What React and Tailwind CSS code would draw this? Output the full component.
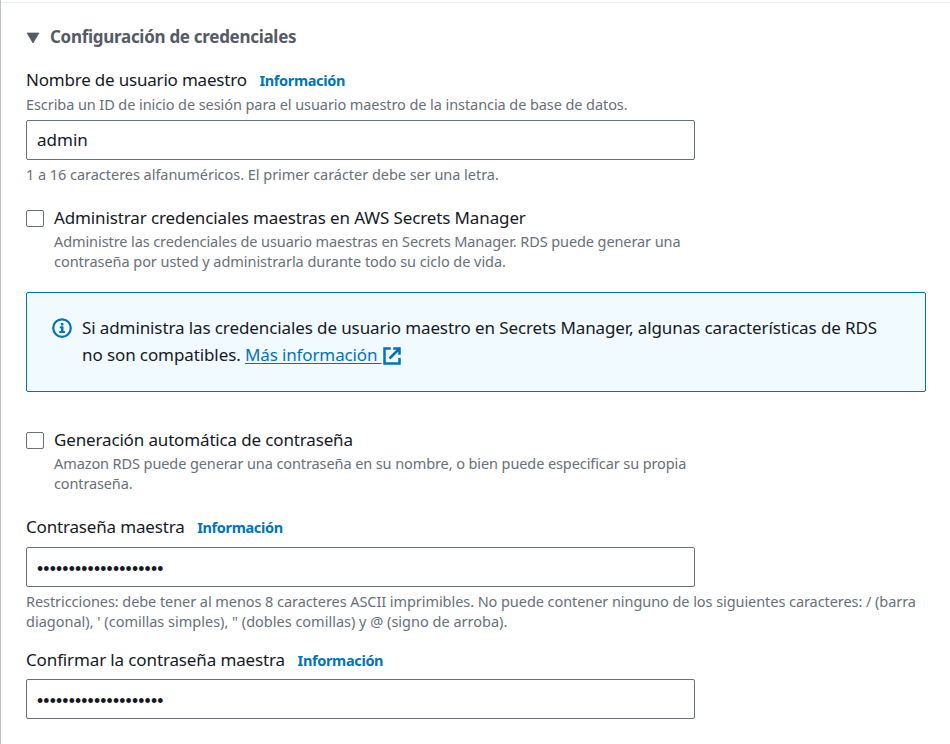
function Label({ children, className = "", textClass = "" }) {
  return (
    <div className={`flex h-7 items-baseline gap-[12.6px] whitespace-nowrap leading-7 ${className}`}>
      <label className={`text-[17px] text-[#16191f] ${textClass}`}>{children}</label>
      <a className="text-[14.5px] font-bold tracking-[-0.34px] text-[#0073bb]">Información</a>
    </div>
  );
}

function Hint({ children, className = "" }) {
  return (
    <div className={`flex flex-col whitespace-nowrap text-[14.5px] leading-5 text-[#687078] ${className}`}>{children}</div>
  );
}

function Field({ type = "text", value, className = "" }) {
  return (
    <input
      type={type}
      readOnly
      value={value}
      className={`block h-10 w-[669px] rounded-[2px] border border-[#687078] bg-white px-2.5 text-[#16191f] outline-none ${className}`}
    />
  );
}

function Check({ label, labelClass = "", children, className = "" }) {
  return (
    <div className={`flex gap-2.5 ${className}`}>
      <span className="mt-1.5 h-[17px] w-[18px] shrink-0 rounded-[2px] border border-[#687078] bg-white" />
      <div>
        <div className={`h-[27px] whitespace-nowrap text-[17px] leading-7 text-[#16191f] ${labelClass}`}>{label}</div>
        {children}
      </div>
    </div>
  );
}

export default function App() {
  return (
    <main className="h-[744px] w-[950px] overflow-hidden border-l border-[#c0c5ca] bg-white font-['Noto_Sans','Open_Sans',sans-serif]">
      <div className="mt-[2px] h-px bg-[#eaeded]" />
      <div className="pl-[25px] pt-[22px]">
        <div className="flex h-6 items-center gap-2.5">
          <svg width="14" height="12" viewBox="0 0 14 12" className="mt-0.5 text-[#545b64]">
            <path d="M1 1h12L7 11z" fill="currentColor" stroke="currentColor" strokeWidth="0.7" />
          </svg>
          <h2 className="whitespace-nowrap text-[17px] font-bold leading-6 tracking-[-0.29px] text-[#545b64]">Configuración de credenciales</h2>
        </div>

        <Label className="mt-[17px]" textClass="tracking-[-0.2px]">Nombre de usuario maestro</Label>
        <Hint>
          <span className="tracking-[-0.08px]">Escriba un ID de inicio de sesión para el usuario maestro de la instancia de base de datos.</span>
        </Hint>
        <Field value="admin" className="mt-1.5 pb-0.5 text-[17px]" />
        <Hint className="mt-1">
          <span className="tracking-[-0.035px]">1 a 16 caracteres alfanuméricos. El primer carácter debe ser una letra.</span>
        </Hint>

        <Check label="Administrar credenciales maestras en AWS Secrets Manager" labelClass="tracking-[-0.12px]" className="mt-5">
          <Hint>
            <span className="tracking-[-0.09px]">Administre las credenciales de usuario maestras en Secrets Manager. RDS puede generar una</span>
            <span className="tracking-[-0.045px]">contraseña por usted y administrarla durante todo su ciclo de vida.</span>
          </Hint>
        </Check>

        <section className="mt-[21px] flex h-[100px] w-[900px] gap-2.5 rounded-[2px] border border-[#0073bb] bg-[#f1faff] pl-[25px] pt-[21px]">
          <svg width="20" height="20" viewBox="0 0 16 16" className="mt-1 shrink-0" fill="none" stroke="#0073bb">
            <circle cx="8" cy="8" r="7" strokeWidth="1.8" />
            <path d="M5.8 11.2h4.6M6.2 7.5h2.6" strokeWidth="1.5" />
            <path d="M8.2 12V6.8M8.1 3.9v2" strokeWidth="2" />
          </svg>
          <div className="whitespace-nowrap text-[17px] leading-[27px] text-[#16191f]">
            <p className="tracking-[-0.105px]">Si administra las credenciales de usuario maestro en Secrets Manager, algunas características de RDS</p>
            <div className="flex">
              <span className="tracking-[-0.1px]">no son compatibles.&nbsp;</span>
              <a className="whitespace-pre tracking-[-0.13px] text-[#0073bb] underline decoration-1 underline-offset-2">Más información </a>
              <svg width="20" height="20" viewBox="0 0 16 16" className="mt-[5px]" fill="none" stroke="#0073bb" strokeWidth="2">
                <path d="M7 2H2v12h12V9.5M9 2h5v5M6 10l7.6-7.6" />
              </svg>
            </div>
          </div>
        </section>

        <Check label="Generación automática de contraseña" labelClass="tracking-[-0.15px]" className="mt-[34px]">
          <Hint>
            <span className="tracking-[-0.095px]">Amazon RDS puede generar una contraseña en su nombre, o bien puede especificar su propia</span>
            <span className="tracking-[-0.13px]">contraseña.</span>
          </Hint>
        </Check>

        <Label className="mt-5" textClass="tracking-[-0.17px]">Contraseña maestra</Label>
        <Field type="password" value="contrasena-maestra-1" className="mt-1.5 pt-1 font-['Liberation_Sans',sans-serif] text-[17.5px] tracking-[0.2px]" />
        <Hint className="mt-1">
          <span className="tracking-[-0.065px]">Restricciones: debe tener al menos 8 caracteres ASCII imprimibles. No puede contener ninguno de los siguientes caracteres: / (barra</span>
          <span>diagonal), ' (comillas simples), " (dobles comillas) y @ (signo de arroba).</span>
        </Hint>

        <Label className="mt-[15px]" textClass="tracking-[-0.13px]">Confirmar la contraseña maestra</Label>
        <Field type="password" value="contrasena-maestra-1" className="mt-[5px] pt-1 font-['Liberation_Sans',sans-serif] text-[17.5px] tracking-[0.2px]" />
      </div>
    </main>
  );
}
